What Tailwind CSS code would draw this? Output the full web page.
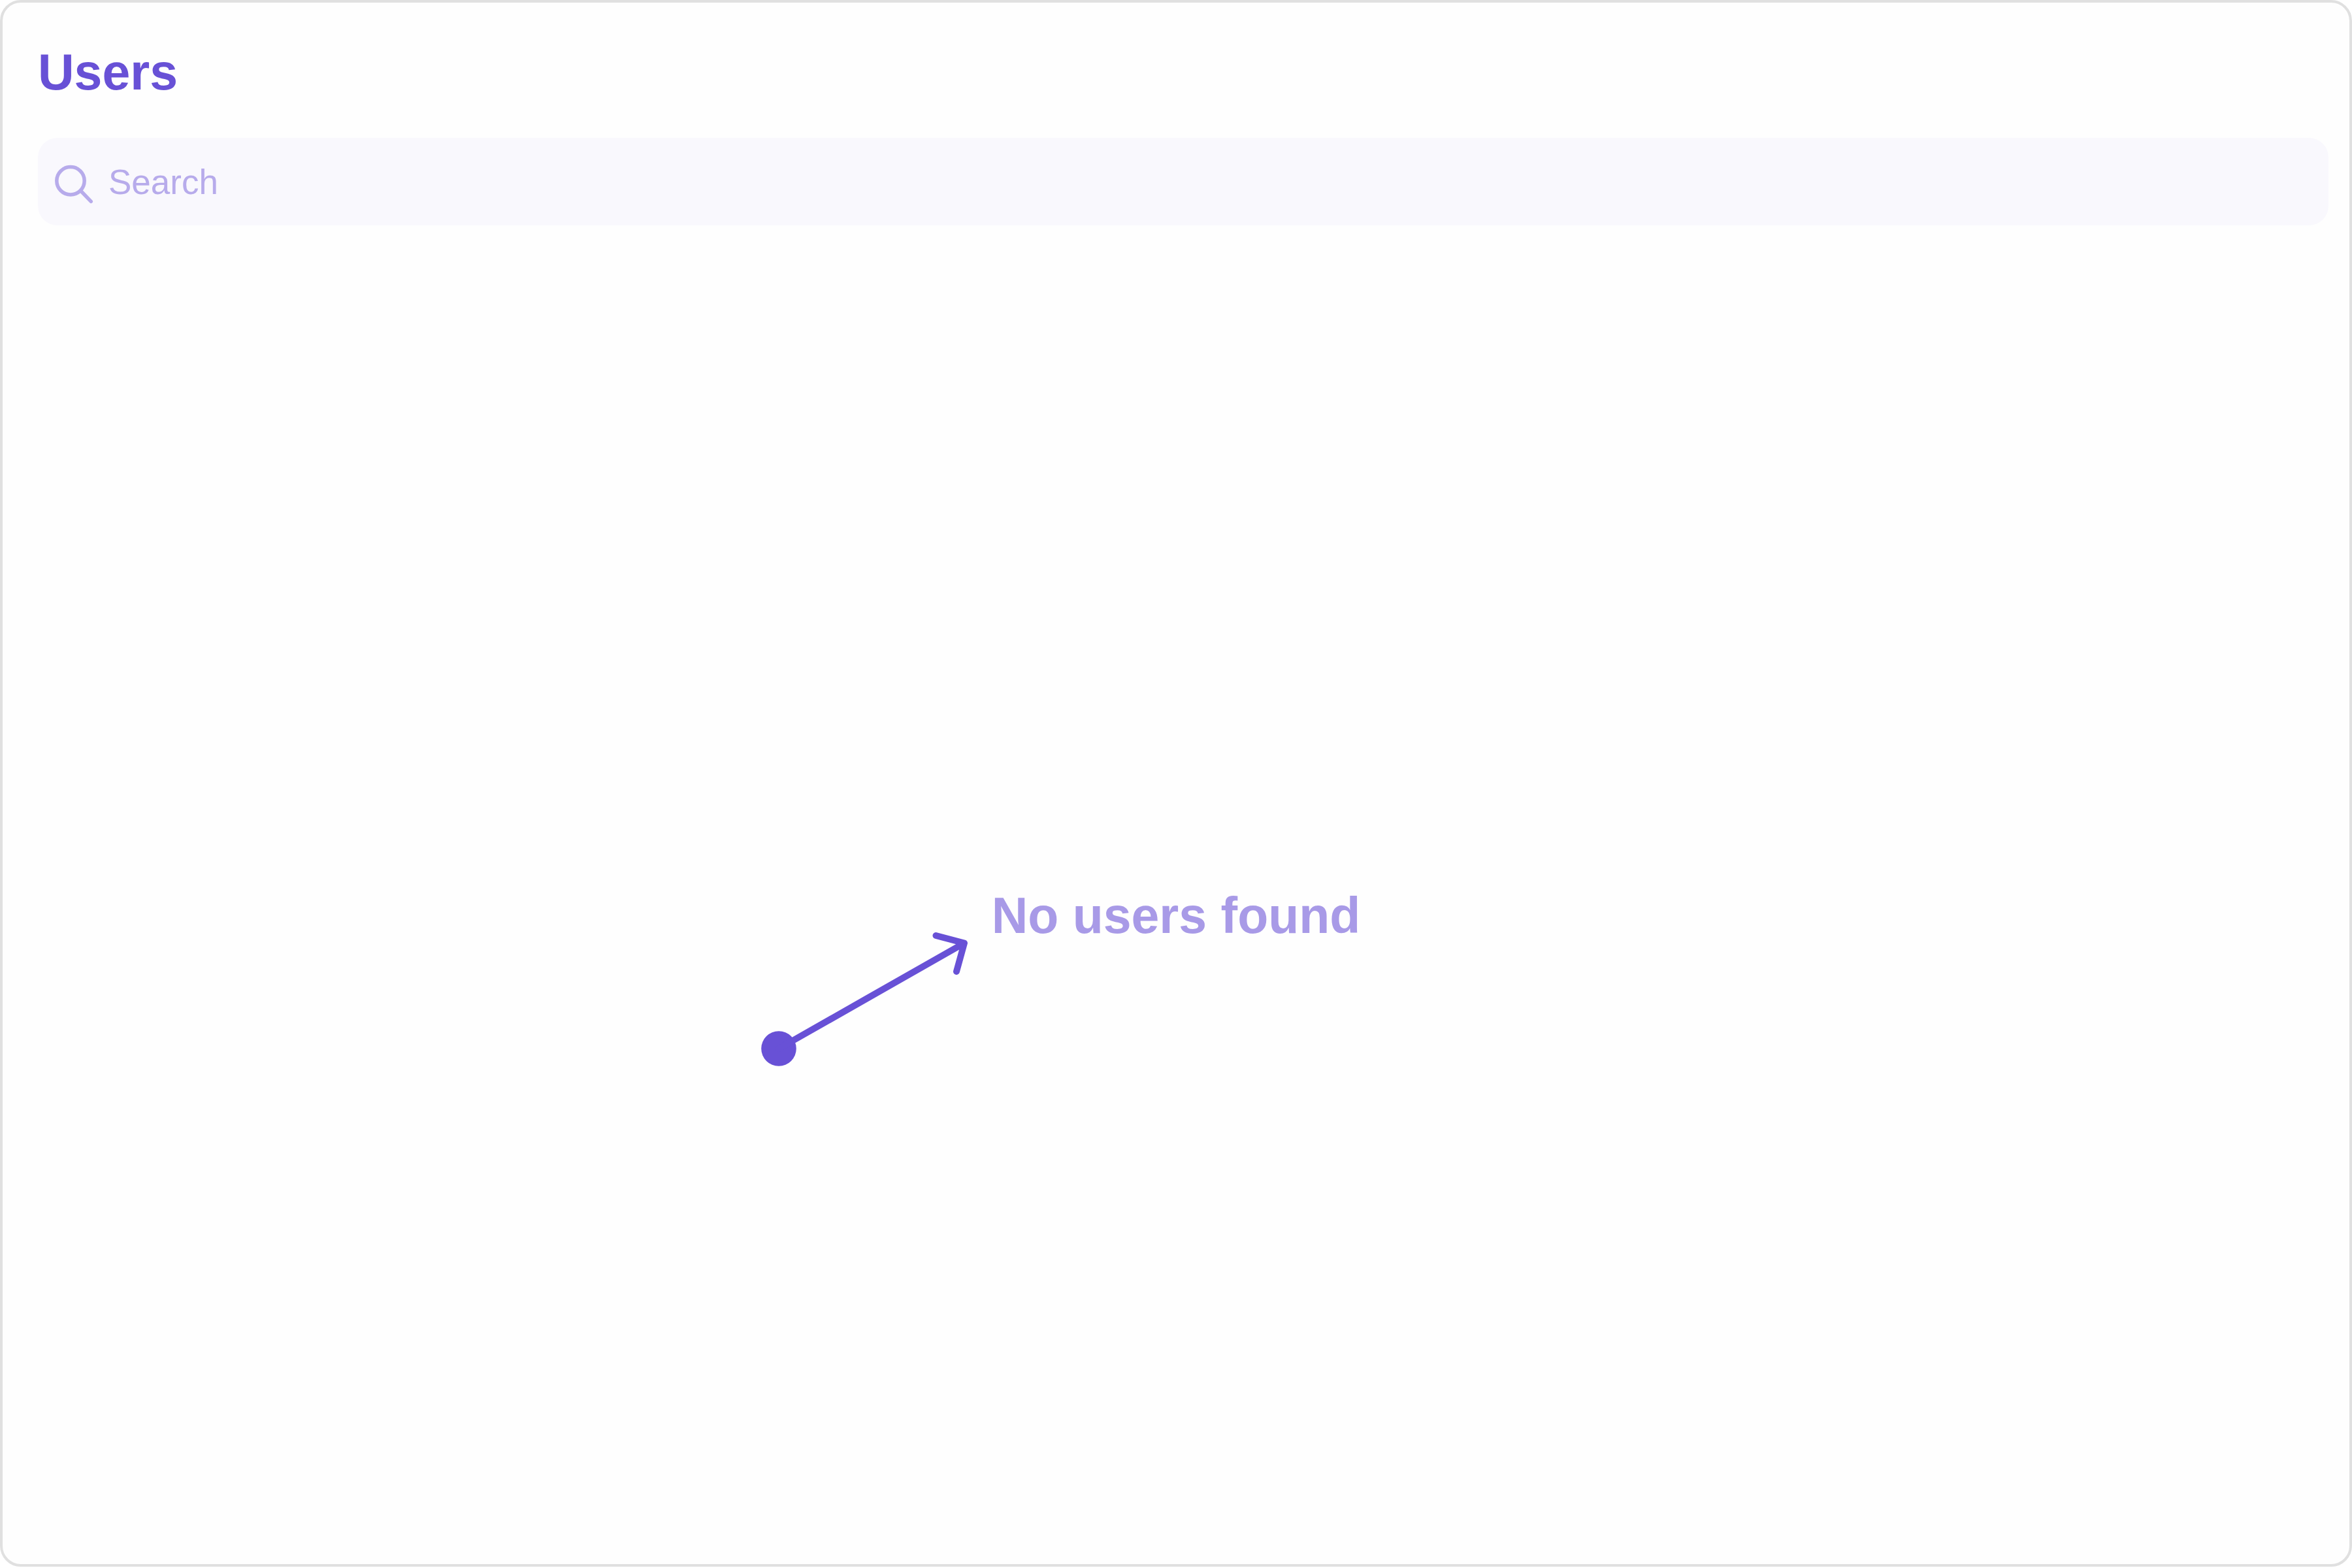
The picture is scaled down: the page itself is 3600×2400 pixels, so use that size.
<!DOCTYPE html>
<html lang="en">
<head>
<meta charset="utf-8">
<meta name="viewport" content="width=device-width, initial-scale=1">
<title>Users</title>
<script src="https://cdn.jsdelivr.net/npm/@tailwindcss/browser@4"></script>
</head>
<body class="flex min-h-screen flex-col bg-white pb-0.5 font-['Liberation_Sans',Arial,sans-serif]">
<main class="flex flex-1 flex-col rounded-[32px] border-4 border-[#e0e0e0] bg-[#fefefe] pt-[62px] pr-8 pl-[54px]">
  <h1 class="text-[77px] leading-[88px] font-bold text-[#6851d6]">Users</h1>

  <label class="mt-[57px] flex h-[134px] items-center gap-[22px] rounded-[30px] bg-[#f9f8fd] pl-6 text-[#b7abeb]">
    <svg class="size-[62px] shrink-0 overflow-visible" viewBox="0 0 62 62" fill="none" stroke="currentColor" stroke-width="5.5" stroke-linecap="round" aria-hidden="true">
      <circle cx="26" cy="29.7" r="21.2"/>
      <path d="M41.5 45 57.3 61.3"/>
    </svg>
    <input type="search" aria-label="Search" placeholder="Search" class="h-full min-w-0 flex-1 bg-transparent text-[53px] text-[#6851d6] outline-none placeholder:text-[#b7abeb]">
  </label>

  <section class="mt-[62px] flex flex-1 items-center justify-center pr-[22px]">
    <div class="relative">
      <h2 class="text-[77px] leading-[88px] font-bold text-[#a89ae7]">No users found</h2>
      <!-- pointer towards the empty-state message -->
      <svg class="absolute top-[69px] right-full mr-[35px] h-[210px] w-[320px]" viewBox="0 0 320 210" fill="none" stroke="#6851d6" stroke-width="10" stroke-linecap="round" stroke-linejoin="round" aria-hidden="true">
        <circle cx="29" cy="179" r="26.8" fill="#6851d6" stroke="none"/>
        <path d="M29 179 313 17.5M269.5 6 313 17.5 301 61"/>
      </svg>
    </div>
  </section>
</main>
</body>
</html>
